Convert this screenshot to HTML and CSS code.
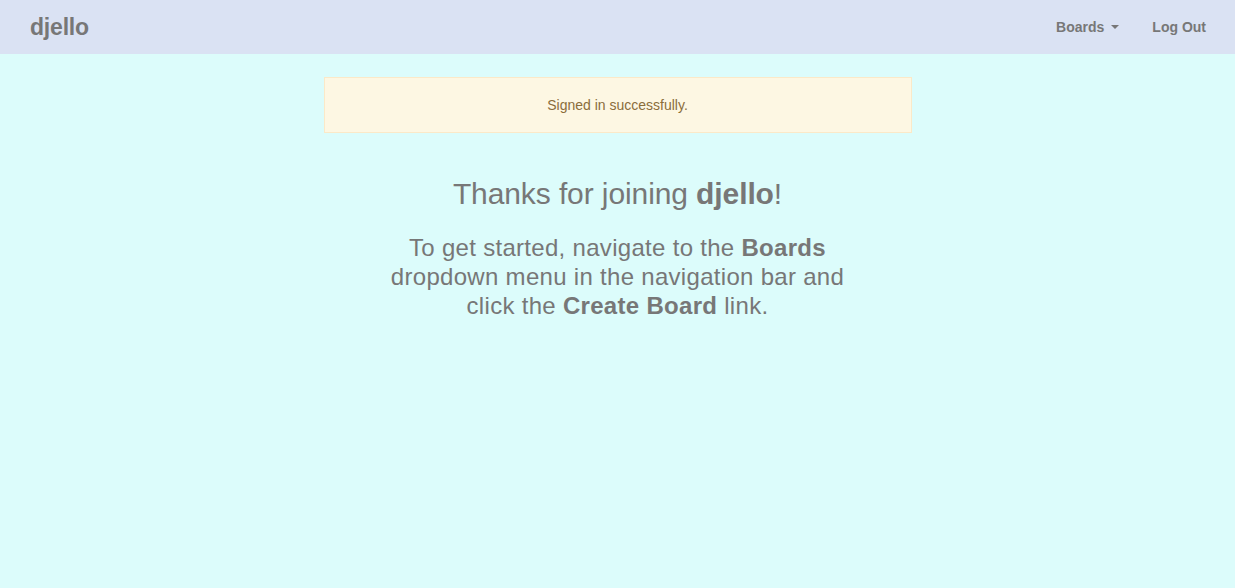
FILE: index.html
```html
<!DOCTYPE html>
<html>
<head>
<meta charset="utf-8">
<link rel="stylesheet" href="styles.css">
</head>
<body>
<nav class="navbar">
  <a class="brand">djello</a>
  <ul class="nav">
    <li class="nav-item">Boards <span class="caret"></span></li>
    <li class="nav-item">Log Out</li>
  </ul>
</nav>
<main class="content">
  <div class="alert">Signed in successfully.</div>
  <h1 class="title">Thanks for joining <b>djello</b>!</h1>
  <p class="lead">To get started, navigate to the <b>Boards</b> dropdown menu in the navigation bar and click the <b>Create Board</b> link.</p>
</main>
</body>
</html>
```
FILE: styles.css
```css
html, body {
  margin: 0;
  padding: 0;
  height: 100%;
}
body {
  background: #dcfcfb;
  font-family: "Liberation Sans", Arial, sans-serif;
  color: #777777;
}
.navbar {
  height: 54px;
  background: #dae2f3;
  display: flex;
  align-items: center;
  justify-content: space-between;
  padding: 0 29px 0 30px;
}
.brand {
  font-size: 23px;
  font-weight: bold;
  color: #777;
  letter-spacing: -0.2px;
}
.nav {
  list-style: none;
  margin: 0;
  padding: 0;
  display: flex;
  gap: 33px;
}
.nav-item {
  font-size: 14px;
  font-weight: bold;
  color: #777;
  display: flex;
  align-items: center;
}
.caret {
  display: inline-block;
  width: 0;
  height: 0;
  margin-left: 7px;
  border-top: 4px solid #777;
  border-left: 4px solid transparent;
  border-right: 4px solid transparent;
}
.content {
  display: flex;
  flex-direction: column;
  align-items: center;
  padding-top: 23px;
}
.alert {
  box-sizing: border-box;
  width: 588px;
  height: 56px;
  display: flex;
  align-items: center;
  justify-content: center;
  background: #fdf7e3;
  border: 1px solid #fbe9c8;
  color: #8a6d3b;
  font-size: 14px;
  padding-bottom: 1px;
}
.title {
  margin: 43px 0 0;
  font-size: 30px;
  font-weight: normal;
  line-height: 36px;
  color: #777;
  letter-spacing: -0.1px;
}
.title b {
  font-weight: bold;
}
.lead {
  margin: 21px 0 0;
  width: 480px;
  text-align: center;
  font-size: 24px;
  line-height: 29px;
  letter-spacing: 0.3px;
  color: #777;
}
```
